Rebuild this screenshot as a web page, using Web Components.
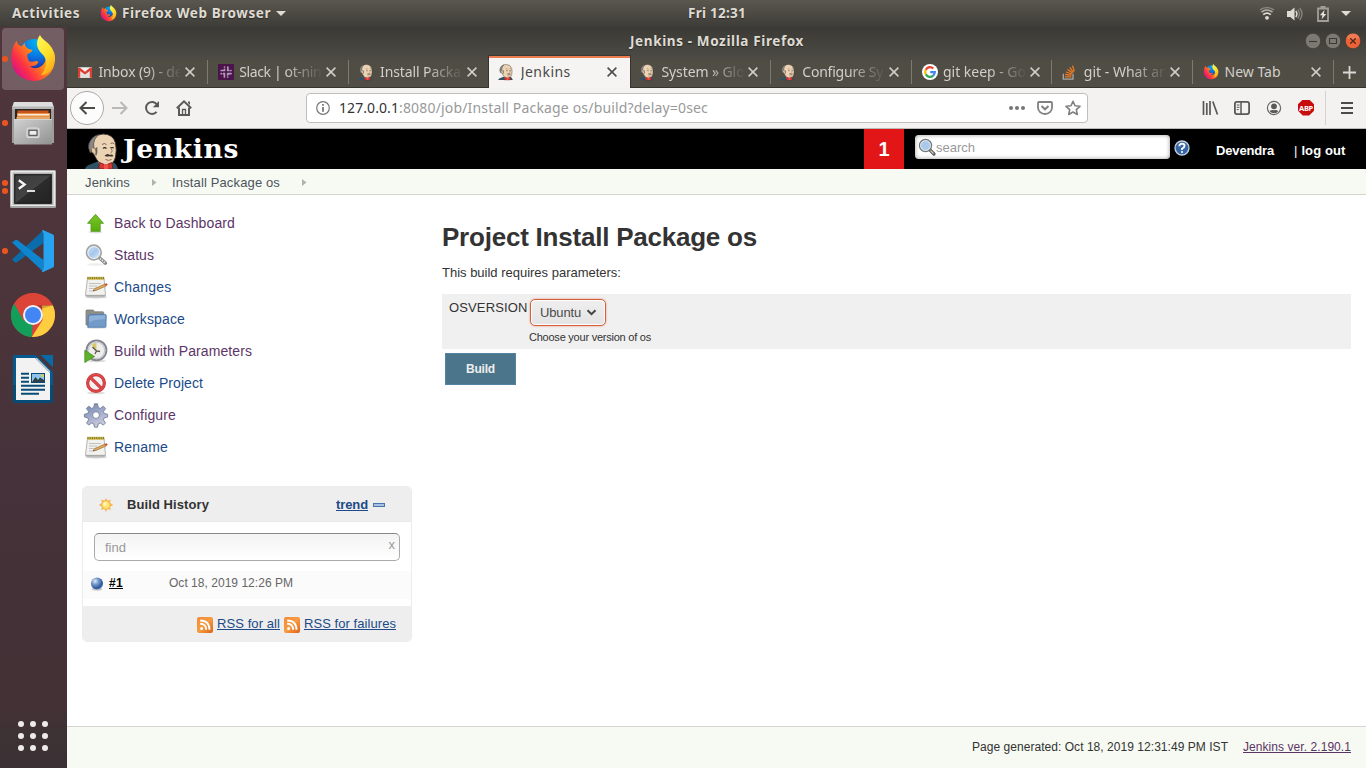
<!DOCTYPE html>
<html lang="en">
<head>
<meta charset="utf-8">
<title>Jenkins</title>
<style>
html,body{margin:0;height:100%;overflow:hidden;background:#fff}
body{font-family:"Liberation Sans",Arial,sans-serif;font-size:13px;color:#333}
</style>
</head>
<body>
<desk-screen></desk-screen>
<script>
const UI = '"Noto Sans","Open Sans",sans-serif';

const ICONS = {
firefox:`<svg viewBox="0 0 48 48"><defs>
<linearGradient id="a" x1="1" y1=".2" x2=".1" y2=".85"><stop offset="0" stop-color="#ffe92e"/><stop offset=".3" stop-color="#ffae12"/><stop offset=".52" stop-color="#ff7022"/><stop offset=".76" stop-color="#fb2f48"/><stop offset="1" stop-color="#d80f8e"/></linearGradient>
<radialGradient id="b" cx=".6" cy=".1" r="1"><stop offset="0" stop-color="#00b5f5"/><stop offset=".5" stop-color="#0a72e0"/><stop offset="1" stop-color="#2b1a8c"/></radialGradient>
<linearGradient id="c" x1=".3" y1="0" x2=".8" y2="1"><stop offset="0" stop-color="#fff44f"/><stop offset=".5" stop-color="#ffdf2c"/><stop offset="1" stop-color="#ffa013"/></linearGradient></defs>
<circle cx="25" cy="19.5" r="15.5" fill="url(#b)"/>
<path d="M7.800 5.500C8 9 9.500 10.500 12.500 11.200L16 7.800C15.500 11 17.500 14.300 23.500 15C22.500 18 18.500 18.500 18.200 20C18 22 20 26 20 26C23 28.500 27 24.500 29.300 26.800C28.500 31 23 31.500 21 31C25 35.500 34.500 33 36.500 25C38 19 35.500 15 33 12L45 17C48 27 44 38 35.500 43C27 48.500 13 46 6.500 37C0 28 1.500 13 7.800 5.500Z" fill="url(#a)"/>
<path d="M31 0C32.500 4.500 39.500 6.500 43.500 14C46.500 20 46 29 42.500 34C39.500 38.500 35 40 32 40C36.500 35 38.200 29 36.700 24.500C35 19 30.500 18 28.500 12C27.300 7 29 2.500 31 0Z" fill="url(#c)"/></svg>`,
files:`<svg viewBox="0 0 42 44"><defs><linearGradient id="a" x1="0" y1="0" x2="1" y2="1"><stop offset="0" stop-color="#d2d2d2"/><stop offset="1" stop-color="#919191"/></linearGradient></defs>
<path d="M2 1h38l2 5v36H0V6z" fill="#9d9d9d"/><path d="M2 1h38l1.500 5H.5z" fill="#dedede"/><path d="M0 5.500h42v3H0z" fill="#b6b6b6"/>
<path d="M3 8h36v12H3z" fill="#2a2523"/><path d="M5.500 9.500h31V13h-31z" fill="#c9541b"/><path d="M5 12h33v6H5z" fill="#e89043"/><path d="M6 13.200h31v1.200H6z" fill="#fff"/><path d="M4.500 16h33v2h-33z" fill="#e6a666"/>
<path d="M2 18h38v25.500H2z" fill="url(#a)"/><path d="M2 18h38v.8H2z" fill="#ddd"/><rect x="15" y="27" width="12" height="9.500" rx="2" fill="#bcbcbc" stroke="#ddd" stroke-width="1.200"/><rect x="17" y="29.300" width="8" height="5" fill="#eee" stroke="#444" stroke-width="1"/></svg>`,
terminal:`<svg viewBox="0 0 46 38"><defs><linearGradient id="a" x1="0" y1="0" x2="1" y2="1"><stop offset="0" stop-color="#3c3c3c"/><stop offset=".5" stop-color="#434343"/><stop offset=".51" stop-color="#2c2c2c"/><stop offset="1" stop-color="#222"/></linearGradient></defs>
<rect width="46" height="38" rx="1.500" fill="#a5a5a5"/><rect x=".8" y=".8" width="44.400" height="35.200" fill="#e9e9e9"/><rect x="2.500" y="2.500" width="41" height="32.500" fill="#b1b1b1"/><rect x="4.200" y="4.200" width="37.600" height="29.600" fill="#080808"/><rect x="5.200" y="5.200" width="35.600" height="27.600" fill="url(#a)"/>
<path d="M8.800 10.200l5.800 4.300-5.800 4.300" fill="none" stroke="#f4f4f4" stroke-width="2.400"/><path d="M17 21h8" stroke="#f4f4f4" stroke-width="1.800"/></svg>`,
vscode:`<svg viewBox="0 0 42 42"><path d="M0 29.500L31 .5 31.500 13 4.500 32.500Q3.300 33 2 31.500z" fill="#0b6cab"/><path d="M0 12.500l3.500-2.600Q4.600 9.500 6 10.400L31.500 30v12z" fill="#0f85cf"/><path d="M31 0l10 4.600q1 .5 1 1.600v29.500q0 1.200-1 1.700L31 42q-1.500.2-.6-1.500 1-.8 1.100-3V4.500Q31.400 2.500 30.200 1 30 0 31 0z" fill="#27a3f0"/></svg>`,
chrome:`<svg viewBox="0 0 44 44"><circle cx="22" cy="22" r="22" fill="#db4437"/><path d="M3.200 10.500L12.500 27 21.700 32l-1 12A22 22 0 0 1 3.200 10.500z" fill="#139e59"/><path d="M41.700 12.200A22 22 0 0 1 20.800 44L31.600 27 31 12.500z" fill="#ffcd40"/><path d="M3.200 10.500A22 22 0 0 1 41.800 12.300H22L12.500 27z" fill="#db4437"/><path d="M22 12.300h19.800l-10.800 3.500zM12.500 27L4.800 13z" fill="#0003"/><circle cx="22" cy="22" r="10" fill="#f1f1f1"/><circle cx="22" cy="22" r="8" fill="#4285f4"/></svg>`,
writer:`<svg viewBox="0 0 40 48"><path d="M27.500 0H40v12.500z" fill="#0a6aa5"/><path d="M2 0h21L40 17v29q0 2-2 2H2q-2 0-2-2V2q0-2 2-2z" fill="#045a8e"/><path d="M0 30h40v16q0 2-2 2H2q-2 0-2-2z" fill="#064c77"/><path d="M3 3h19l15 15v27H3z" fill="#f2f2f2"/><path d="M22 3l15 15v-2L24 3z" fill="#cfcfcf"/><path d="M8 18.800h8M8 22.800h8M8 26.800h8M8 30.800h24M8 34.800h24M8 38.800h18" stroke="#0a4c77" stroke-width="1.900"/><rect x="18.500" y="18.500" width="13" height="9" fill="#8dc4ec" stroke="#0a4c77"/><path d="M19 27l3.500-5 2.500 3 2-2.500L31 25v2z" fill="#2f3f46"/><circle cx="29.500" cy="20.500" r="1.500" fill="#ecc542"/></svg>`,
apps:`<svg viewBox="0 0 30 30" fill="#eeecea"><circle cx="3" cy="3" r="3"/><circle cx="15" cy="3" r="3"/><circle cx="27" cy="3" r="3"/><circle cx="3" cy="15" r="3"/><circle cx="15" cy="15" r="3"/><circle cx="27" cy="15" r="3"/><circle cx="3" cy="27" r="3"/><circle cx="15" cy="27" r="3"/><circle cx="27" cy="27" r="3"/></svg>`,
butler:`<svg viewBox="0 0 33 36"><path d="M0 36Q1 32.500 5 31.500l9-3.500h11q7 2 8 8z" fill="#2e5264"/><path d="M13 28l4 8h6l4-8z" fill="#f3f3f3"/>
<path d="M4.500 14Q5 2 18 1q10 0 12.500 9Q32 17 30.500 24 29 31 23 32q-7 .5-11-5l-4-7z" fill="#ecd3b4" stroke="#3a332d" stroke-width=".9"/>
<path d="M5.500 20Q2.500 15 4 10.500 6 5 10 3L13.500 1.700Q8.700 6 8.500 11L9 15.500l-1 2.500z" fill="#8a8785" stroke="#45413e" stroke-width=".7"/><path d="M10.500 15l1.800-1v5.500l-1 3.500-1-1z" fill="#66615d"/>
<path d="M9.500 21q-4-1.500-3.300-5 1.200-2.600 3.600-.6 1.200 1.200 1 3.200" fill="#e8c7a3" stroke="#6a5545" stroke-width=".8"/>
<path d="M17 11.500q2.500-2 4.500 0M25.500 10.500q2-1.500 4 .5" fill="none" stroke="#6b5747" stroke-width=".9"/><path d="M18 15.500q1.500-1.700 3.500 0M25.800 15q1.400-1.200 3 .2" fill="none" stroke="#222" stroke-width="1.100"/><path d="M25 14q4 4.500.5 6" fill="none" stroke="#8d6a4d" stroke-width=".9"/><path d="M19.500 22.700q3-2.700 5-.8 2.500-.9 4 1-2 1-4 .3-2.500.9-5-.5z" fill="#3f342b"/><path d="M20.500 26.500q3 1.800 6 0" fill="none" stroke="#7c4c3b" stroke-width=".8"/>
<path d="M14.500 29.500l6 2.500 6.500-2.500.8 6.500h-14z" fill="#d33833" stroke="#701515" stroke-width=".7"/><path d="M19 31h4v5h-4z" fill="#ee5548"/></svg>`,
gmail:`<svg viewBox="0 0 16 12"><rect width="16" height="12" rx="1" fill="#f2f2f2"/><path d="M2 12V3l6 5 6-5v9z" fill="#e4e1df"/><path d="M0 1.200V11q0 1 1 1h1.500V4.200L8 8.300l5.500-4.100V12H15q1 0 1-1V1.200Q15.500-.3 14 .4L8 5 2 .4Q.5-.3 0 1.200z" fill="#dc3f33"/></svg>`,
slack:`<svg viewBox="0 0 16 16"><rect width="16" height="16" fill="#4a154b"/><g stroke="#b79ab9" stroke-width="1.700" stroke-linecap="round"><path d="M6.500 5.300v1.200M6.500 3h0M9.800 3v3.500M12.800 6.500h.1M3.200 6.500h3.300M3.200 9.700h.1M9.700 9.700h3.300M9.800 6.500h1M5.400 9.700h1v3.300M9.700 9.700v1.200M9.700 13h0"/></g></svg>`,
google:`<svg viewBox="0 0 16 16"><circle cx="8" cy="8" r="8" fill="#fff"/><g fill="none" stroke-width="2.300"><path d="M11.300 4.500A4.800 4.800 0 0 0 3.800 5.700" stroke="#ea4335"/><path d="M3.800 5.700a4.800 4.800 0 0 0 0 4.700" stroke="#fbbc05"/><path d="M3.800 10.400a4.800 4.800 0 0 0 7.400 1.200" stroke="#34a853"/><path d="M11.200 11.600a4.800 4.800 0 0 0 1.600-3.500H8.200" stroke="#4285f4"/></g></svg>`,
stack:`<svg viewBox="0 0 16 16" fill="none"><path d="M1.300 9.800v5.300h9.700V9.800" stroke="#aaa9a5" stroke-width="1.300"/><path d="M3 12.900h6.500M3.200 10.500l6.300.6M4 8l5.900 2M5.500 5.500l5 3.400M7.700 3.300l3.800 5M10.500 1.600l1.800 5.700" stroke="#ee7a20" stroke-width="1.300"/></svg>`,
close:`<svg viewBox="0 0 10 10"><path d="M.6.6l8.800 8.800M9.400.6L.6 9.400" stroke="currentColor" stroke-width="1.500"/></svg>`,
plus:`<svg viewBox="0 0 14 14"><path d="M7 0v14M0 7h14" stroke="#d9d8d4" stroke-width="1.900"/></svg>`,
wifi:`<svg viewBox="0 0 14 12" fill="none"><circle cx="7" cy="10.300" r="1.900" fill="#dfdbd2"/><path d="M3.200 7.200q3.800-3.300 7.600 0" stroke="#dfdbd2" stroke-width="1.700"/><path d="M1.500 4.600q5.500-4.300 11 0" stroke="#b5b2ab" stroke-width="1.600"/><path d="M0 2.400q7-4.500 14 0" stroke="#8b8881" stroke-width="1.300"/></svg>`,
volume:`<svg viewBox="0 0 16 14" fill="none"><path d="M0 4h3.300L7.500.5v13L3.300 10H0z" fill="#dfdbd2"/><path d="M8.800 4q2.200 3 0 6" stroke="#dfdbd2" stroke-width="1.500"/><path d="M10.700 2.500q3.600 4.500 0 9M12.800 1q4.500 6 0 12" stroke="#85827b" stroke-width="1.400"/></svg>`,
battery:`<svg viewBox="0 0 12 16"><path d="M1 2.500h10V15H1z" fill="none" stroke="#a19e97" stroke-width="1.800"/><path d="M3.500 0h5v2h-5z" fill="#a19e97"/><path d="M7.500 4L3 9.300h2.500L4.500 13.500 9.200 8H6.800z" fill="#eae7df"/></svg>`,
caret:`<svg viewBox="0 0 10 5"><path d="M0 0h10L5 5z" fill="#dfdbd2"/></svg>`,
wmin:`<svg viewBox="0 0 16 16"><circle cx="8" cy="8" r="7.700" fill="#7c7972" stroke="#35342f" stroke-width=".6"/><path d="M4 8.500h8" stroke="#3a3935" stroke-width="1.100"/></svg>`,
wmax:`<svg viewBox="0 0 16 16"><circle cx="8" cy="8" r="7.700" fill="#7c7972" stroke="#35342f" stroke-width=".6"/><path d="M4.500 5.500h7v5h-7z" fill="none" stroke="#3a3935" stroke-width="1.100"/></svg>`,
wclose:`<svg viewBox="0 0 16 16"><circle cx="8" cy="8" r="7.700" fill="#ee6238" stroke="#35342f" stroke-width=".6"/><path d="M1.500 5a7 7 0 0 1 13 0Q8 8 1.500 5z" fill="#f58a68" opacity=".6"/><path d="M5.200 5.200l5.600 5.600M10.800 5.200l-5.600 5.600" stroke="#51281a" stroke-width="1.300"/></svg>`,
back:`<svg viewBox="0 0 16 14" fill="none" stroke="currentColor" stroke-width="2"><path d="M16 7H1.500M7.500 1l-6 6 6 6"/></svg>`,
fwd:`<svg viewBox="0 0 16 14" fill="none" stroke="currentColor" stroke-width="2"><path d="M0 7h14.500M8.500 1l6 6-6 6"/></svg>`,
reload:`<svg viewBox="0 0 16 16"><path d="M12.600 11.800A6 6 0 1 1 13 4.500" fill="none" stroke="#5a5957" stroke-width="2"/><path d="M15 1v6.200H8.800z" fill="#5a5957"/></svg>`,
home:`<svg viewBox="0 0 16 16" fill="none" stroke="#5a5957"><path d="M.8 8.300L8 1.300l7.200 7" stroke-width="2"/><path d="M3 7.500V15h10V7.500" stroke-width="2"/><path d="M6.500 15V9.500h3V15" stroke-width="1.300"/><path d="M12 1.500h2V5l-2-2z" fill="#5a5957" stroke="none"/></svg>`,
info:`<svg viewBox="0 0 14 14"><circle cx="7" cy="7" r="6.300" fill="none" stroke="#777" stroke-width="1.200"/><path d="M7 6v4.800M7 3v1.700" stroke="#777" stroke-width="1.800"/></svg>`,
dots:`<svg viewBox="0 0 16 4" fill="#777"><circle cx="2" cy="2" r="2"/><circle cx="8" cy="2" r="2"/><circle cx="14" cy="2" r="2"/></svg>`,
pocket:`<svg viewBox="0 0 16 14" fill="none" stroke="#808080" stroke-width="1.800"><path d="M2 1h12q1 0 1 1v4.500a7 6.500 0 0 1-14 0V2q0-1 1-1z"/><path d="M4.500 5L8 8.300 11.500 5" stroke-width="2"/></svg>`,
star:`<svg viewBox="0 0 16 16"><path d="M8 1.300l2 4.500 5 .5-3.700 3.300 1 4.900L8 12l-4.300 2.500 1-4.900L1 6.300l5-.5z" fill="none" stroke="#808080" stroke-width="1.600" stroke-linejoin="round"/></svg>`,
library:`<svg viewBox="0 0 16 14" stroke="#5a5957" stroke-width="1.700"><path d="M1.500 0v14M4.800 2v12M8 0v14M10.800.5L15.500 13.500"/></svg>`,
sidebar:`<svg viewBox="0 0 16 14" fill="none" stroke="#5a5957"><rect x=".9" y=".9" width="14.200" height="12.200" rx="2" stroke-width="1.800"/><path d="M7 1v12" stroke-width="1.500"/><path d="M2.800 4h2.700M2.800 6.300h2.700M2.800 8.600h2" /></svg>`,
account:`<svg viewBox="0 0 16 16"><circle cx="8" cy="8" r="6.600" fill="none" stroke="#6a6967" stroke-width="1.200"/><circle cx="8" cy="6.300" r="2.900" fill="#5a5957"/><path d="M3.800 11.200Q5 9.700 8 10.200q3-.5 4.200 1Q11 13.300 8 13.300t-4.200-2.100z" fill="#5a5957"/></svg>`,
menu:`<svg viewBox="0 0 12 12" stroke="#4c4b49" stroke-width="1.800"><path d="M0 1h12M0 6h12M0 11h12"/></svg>`,
help:`<svg viewBox="0 0 16 16"><circle cx="8" cy="8" r="7" fill="#3465a4" stroke="#c3cfe4" stroke-width="1.300"/><path d="M5.300 6.300Q5.500 3.600 8 3.600q2.600.1 2.600 2.300Q10.500 7.400 8 8.800V10" fill="none" stroke="#fff" stroke-width="1.800"/><circle cx="8" cy="12" r="1.100" fill="#fff"/></svg>`,
search:`<svg viewBox="0 0 24 24"><defs><linearGradient id="a" x2="1" y2="1"><stop offset="0" stop-color="#dcebfa"/><stop offset=".5" stop-color="#a5c6ec"/><stop offset="1" stop-color="#e4effa"/></linearGradient></defs><ellipse cx="12" cy="21.500" rx="9" ry="1.300" fill="#0001"/><path d="M15 14.500l6.300 5.500" stroke="#838381" stroke-width="3.600" stroke-linecap="round"/><path d="M16 15.400l5 4.400" stroke="#ddd" stroke-width="2" stroke-dasharray="1.500 1"/><circle cx="9.800" cy="9.500" r="7.200" fill="url(#a)" stroke="#a2a4a1" stroke-width="1.900"/><circle cx="9.800" cy="9.500" r="6" fill="none" stroke="#f4f8fd" stroke-width=".9"/></svg>`,
search2:`<svg viewBox="0 0 18 18"><path d="M11.500 11.500l4.500 4.500" stroke="#5c5e5b" stroke-width="3.200" stroke-linecap="round"/><path d="M12.500 12.500l3 3" stroke="#c8c8c6" stroke-width="1.200"/><circle cx="7.500" cy="7.500" r="6" fill="#a9c8ea" stroke="#777976" stroke-width="1.500"/><circle cx="7.500" cy="7.500" r="4.900" fill="none" stroke="#eef4fb" stroke-width=".9"/></svg>`,
up:`<svg viewBox="0 0 24 24"><defs><linearGradient id="a" x2="0" y2="1"><stop offset="0" stop-color="#7cc52a"/><stop offset="1" stop-color="#55ad0b"/></linearGradient></defs><ellipse cx="11.500" cy="21" rx="7" ry="1.400" fill="#0002"/><path d="M11.500 3.300l8 9h-3.300v8H7v-8H3.500z" fill="url(#a)" stroke="#5a9a2a" stroke-width=".9"/></svg>`,
note:`<svg viewBox="0 0 24 24"><ellipse cx="12" cy="22" rx="11" ry="1.400" fill="#0003"/><path d="M3.500 3h16.500l1.500 17q0 1-1 1H2.500q-1 0-1-1z" fill="#f1f1ef" stroke="#adada9" stroke-width=".9"/><path d="M2 20.500h19" stroke="#a9a9a5" stroke-width="1.300"/><path d="M3.200 1.800h17v3h-17z" fill="#cbb94f"/><path d="M3.500 3h17" stroke="#85752a" stroke-width="2" stroke-dasharray="1 1.200"/><path d="M5 8.500h12M5 11h8M5 13.500h6M5 16h4" stroke="#c2c2c0"/><path d="M9 16l2-2.600 10-4.400 1 2-10 4.400z" fill="#e3a95c" stroke="#9a6c34" stroke-width=".7"/><path d="M20.800 9l1.700-.8q1.300.6 1 1.900l-1.500.9z" fill="#d93f35"/><path d="M9 16l.8-1.200.7.900z" fill="#333"/></svg>`,
folder:`<svg viewBox="0 0 24 24"><ellipse cx="12.500" cy="20.500" rx="10.500" ry="1.300" fill="#0002"/><path d="M2 18V3.800q0-.8.800-.8h6.500l1.200 1.800h8.300q.9 0 .9.900V18z" fill="#8e8f8b" stroke="#7c7c79" stroke-width=".8"/><path d="M4.300 9q.3-1.300 1.500-1.300 10-.3 15-.3 1.500 0 1.400 1.200l-.3 10.800q0 .8-1 .8H3.800z" fill="#729bc9" stroke="#5079ab" stroke-width=".9"/><path d="M5.200 9q8-.8 16-.8l-.2 4Q11 12 5 15.500z" fill="#9cbde2" opacity=".65"/></svg>`,
clock:`<svg viewBox="0 0 24 24"><ellipse cx="13" cy="22" rx="9" ry="1.300" fill="#0002"/><circle cx="12.500" cy="11.300" r="9.900" fill="#ededeb" stroke="#85878f" stroke-width="2"/><circle cx="12.500" cy="11.300" r="8.300" fill="none" stroke="#c8cbd6" stroke-width="1.300"/><path d="M12.500 11.300L7.500 6q2.200-2.200 5-2z" fill="#d8c866"/><path d="M8.500 8l4 4 3.500.5M12.500 12l-1.500 3" fill="none" stroke="#55534a" stroke-width="1.300"/><path d="M.8 11.300l9.700 6.200-9.700 6z" fill="#5cb327" stroke="#4a8b24" stroke-width=".8"/></svg>`,
no:`<svg viewBox="0 0 24 24"><ellipse cx="12" cy="22" rx="9" ry="1.300" fill="#0002"/><circle cx="12" cy="12" r="8.400" fill="#f6f1f1" stroke="#c4383a" stroke-width="3.200"/><circle cx="12" cy="12" r="8.400" fill="none" stroke="#df4649" stroke-width="2"/><path d="M6.300 6.300l11.400 11.400" stroke="#c83437" stroke-width="3.200"/><path d="M6.300 6.300l11.400 11.400" stroke="#e04a4c" stroke-width="1.900"/></svg>`,
gear:`<svg viewBox="0 0 24 24"><defs><linearGradient id="a" x2=".5" y2="1"><stop offset="0" stop-color="#6d86ae"/><stop offset=".6" stop-color="#a7aecd"/><stop offset="1" stop-color="#c8cadb"/></linearGradient></defs><path fill-rule="evenodd" d="M10.500.8h3l.8 3.700 2 .9 3-2.200 2.300 2.300-2.200 3 .9 2 3.300.7v2.900l-3.300.7-.9 2.100 2.100 3-2.200 2.200-3-2.100-2 .9-.8 3.300h-3l-.8-3.300-2-.9-3 2.100-2.200-2.200 2.100-3-.9-2.100-3.300-.7v-2.900l3.300-.7.9-2-2.200-3 2.300-2.300 3 2.200 2-.9zM12 8.700a3.400 3.400 0 1 0 0 6.800 3.400 3.400 0 0 0 0-6.800z" fill="url(#a)" stroke="#6a7493" stroke-width=".8"/></svg>`,
sun:`<svg viewBox="0 0 16 16"><path d="M8 .7l1.300 3.100 3.700-1.300-1.200 3.300L15.300 8l-3.500 1.700 1.200 3.300-3.700-1.200L8 15.300l-1.300-3.500L3 13l1.200-3.300L.7 8l3.500-2.200L3 2.500l3.700 1.300z" fill="#f8b75c"/><circle cx="8" cy="8" r="4.300" fill="#fce36a" stroke="#f3a63d" stroke-width=".8"/><circle cx="7" cy="7" r="2" fill="#fff6c0"/></svg>`,
minus:`<svg viewBox="0 0 12 4"><rect x=".5" y=".5" width="11" height="3" fill="#a9c1e2" stroke="#4a74ad"/></svg>`,
ball:`<svg viewBox="0 0 16 16"><defs><radialGradient id="a" cx=".35" cy=".3" r=".75"><stop offset="0" stop-color="#e6eef9"/><stop offset=".35" stop-color="#7a9ed0"/><stop offset=".8" stop-color="#2c579a"/><stop offset="1" stop-color="#5d82bb"/></radialGradient></defs><ellipse cx="8" cy="14" rx="6" ry="1.600" fill="#0003"/><circle cx="8" cy="7.500" r="6.900" fill="url(#a)"/></svg>`,
rss:`<svg viewBox="0 0 16 16"><defs><linearGradient id="a" x2="1" y2="1"><stop offset="0" stop-color="#f08a3a"/><stop offset=".5" stop-color="#f79c42"/><stop offset="1" stop-color="#dd6117"/></linearGradient></defs><rect width="16" height="16" rx="2" fill="url(#a)"/><circle cx="4.600" cy="11.600" r="1.500" fill="#fff"/><path d="M3.200 6.800q6 0 6 6M3.200 3.500q9.300 0 9.300 9.300" fill="none" stroke="#fff" stroke-width="1.900"/></svg>`,
chev:`<svg viewBox="0 0 10 7"><path d="M1 1.200l4 4 4-4" fill="none" stroke="#444" stroke-width="2"/></svg>`,
crumb:`<svg viewBox="0 0 5 7"><path d="M0 0l4.500 3.500L0 7z" fill="#b0b3ad"/></svg>`
};

/* Base class: clones a template into an open shadow root. */
class Base extends HTMLElement {
  connectedCallback() {
    if (this.shadowRoot) return;
    const t = document.createElement('template');
    t.innerHTML = this.html();
    this.attachShadow({mode:'open'}).append(t.content.cloneNode(true));
  }
  at(n, d='') { return this.getAttribute(n) ?? d; }
}
const def = (n, f) => customElements.define(n, class extends Base { html() { return f(this); } });

/* <ui-icon name w h> */
def('ui-icon', e => `<style>:host{display:inline-flex;flex:none;width:${e.at('w','16')}px;height:${e.at('h', e.at('w','16'))}px}svg{width:100%;height:100%;display:block;overflow:visible}</style>${ICONS[e.at('name')]}`);

def('desk-screen', () => `<style>
:host{display:grid;width:1366px;height:768px;grid-template:27px 741px / 67px 1299px;overflow:hidden}
top-panel{grid-column:1/3}</style>
<top-panel></top-panel><app-dock></app-dock><browser-window></browser-window>`);

def('top-panel', () => `<style>
:host{display:grid;grid-template-columns:688px auto 1fr;align-items:center;background:linear-gradient(#5a574e,#3d3c38);font:bold 13.500px/27px ${UI};color:#dfdbd2;text-shadow:0 1px 1px #0006}
.l,.r{display:flex;align-items:center}.l{padding-left:12px}.r{justify-content:flex-end;padding-right:15px}
</style><div class="l"><fit-label w="68">Activities</fit-label><ui-icon name="firefox" w="17" style="margin:0 5px 0 20px"></ui-icon><fit-label w="149">Firefox Web Browser</fit-label><ui-icon name="caret" w="10" h="5" style="margin-left:5px"></ui-icon></div>
<span><fit-label w="58">Fri 12:31</fit-label></span>
<div class="r"><ui-icon name="wifi" w="14" h="13"></ui-icon><ui-icon name="volume" w="16" h="14" style="margin:0 14px 0 13px"></ui-icon><ui-icon name="battery" w="12" h="16"></ui-icon><ui-icon name="caret" w="10" h="5" style="margin-left:12px"></ui-icon></div>`);

def('app-dock', () => `<style>
:host{display:flex;flex-direction:column;align-items:flex-start;gap:2px;padding:1px 0 0 2px;box-sizing:border-box;background:linear-gradient(#50363c,#4a343a 45%,#45323a 60%,#433136 92%,#3d3234 95%,#3b3134)}
.g{display:flex;margin:auto 0 17px 16px}</style>
<dock-item active dots="1"><ui-icon name="firefox" w="48"></ui-icon></dock-item>
<dock-item dots="1"><ui-icon name="files" w="42" h="44"></ui-icon></dock-item>
<dock-item dots="2"><ui-icon name="terminal" w="46" h="38" style="margin-top:4px"></ui-icon></dock-item>
<dock-item dots="1"><ui-icon name="vscode" w="42"></ui-icon></dock-item>
<dock-item dots="0"><ui-icon name="chrome" w="44"></ui-icon></dock-item>
<dock-item dots="0"><ui-icon name="writer" w="40" h="48"></ui-icon></dock-item>
<div class="g"><ui-icon name="apps" w="30"></ui-icon></div>`);

def('dock-item', e => `<style>
:host{display:grid;place-items:center;width:62px;height:62px;border-radius:4px;position:relative}
:host([active]){background:#fff3}
.d{position:absolute;left:0;top:0;height:100%;display:flex;flex-direction:column;justify-content:center;gap:2.500px}
i{width:5.500px;height:5.500px;border-radius:50%;background:#e95420}</style><div class="d">${'<i></i>'.repeat(+e.at('dots'))}</div><slot></slot>`);

def('browser-window', () => `<style>:host{display:flex;flex-direction:column}jenkins-page{flex:1}</style>
<title-bar></title-bar><tab-strip></tab-strip><nav-bar></nav-bar><jenkins-page></jenkins-page>`);

def('title-bar', () => `<style>
:host{display:grid;grid-template-columns:563px auto 1fr;align-items:center;height:28px;background:linear-gradient(#3a3935,#4b4943);font:bold 13.500px/28px ${UI};color:#dfdbd2;text-shadow:0 1px 1px #0006}
.b{display:flex;justify-content:flex-end;gap:4px;padding-right:5px}</style><span></span><span><fit-label w="174">Jenkins - Mozilla Firefox</fit-label></span><div class="b"><ui-icon name="wmin"></ui-icon><ui-icon name="wmax"></ui-icon><ui-icon name="wclose"></ui-icon></div>`);

def('tab-strip', () => {
  const t=[['gmail','Inbox (9) - de',84],['slack','Slack | ot-nin',82],['butler','Install Packa',81],['butler','Jenkins',50,1],['butler','System » Glo',83],['butler','Configure Sy',81],['google','git keep - Go',83],['stack','git - What an',84],['firefox','New Tab',56]];
  return `<style>:host{display:flex;height:33px;background:linear-gradient(#4b4943,#504d45 8px);box-sizing:border-box;box-shadow:inset 0 -1px #35342f}.p{flex:1;display:grid;place-items:center;padding:3px 1px 2px 0}</style>`+
  t.map(([i,s,w,a],k)=>`<browser-tab icon="${i}" w="${w}" ${a===1?'active':''} ${k===2||a===1?'nosep':''}>${s}</browser-tab>`).join('')+`<div class="p"><ui-icon name="plus" w="13"></ui-icon></div>`;
});

def('browser-tab', e => `<style>
:host{display:flex;align-items:center;box-sizing:border-box;width:140.750px;height:33px;padding:3px 0 2px 10px;position:relative;font:14px/28px ${UI};color:#d0cfca}
:host(:not([nosep]))::after{content:"";position:absolute;right:0;top:5px;height:24px;width:1px;background:#7d7a72}
:host([active]){background:#f5f4f2;box-shadow:inset 0 1px #3a3935,inset 0 3px #ef7b50,-1px 0 #35342f,1px 0 #35342f;color:#4a4a48}
.f{width:16px;display:flex;justify-content:center}
:host([icon="butler"]) .f{justify-content:flex-start;margin-left:-1px;margin-right:1px}
.t{width:81.500px;height:28px;margin-left:5.500px;overflow:hidden;white-space:nowrap;-webkit-mask:linear-gradient(90deg,#000 46px,transparent 84px)}
:host([active]) .t,:host([w="56"]) .t{-webkit-mask:none}
.x{margin-left:5px;display:flex}</style>
<div class="f"><ui-icon name="${e.at('icon')}" w="${e.at('icon')==='gmail'?14:e.at('icon')==='butler'?15:16}" h="${e.at('icon')==='gmail'?11:16}"></ui-icon></div><div class="t"><fit-label w="${e.at('w')}"><slot></slot></fit-label></div><div class="x"><ui-icon name="close" w="10"></ui-icon></div>`);

def('nav-bar', () => `<style>
:host{display:flex;align-items:center;height:41px;box-sizing:border-box;background:#f3f2f0;border-bottom:1px solid #bcbab6;padding:0 13px 1px 3px}
.bk{width:32px;height:32px;border:1px solid #aaa;border-radius:50%;background:#fcfcfc;display:grid;place-items:center;color:#4c4b49}
.url{display:flex;align-items:center;box-sizing:border-box;width:782px;height:30px;border:1px solid #c0beba;border-radius:4px;background:#fff;margin-left:114px;padding:0 6px 0 9px;font:14px/28px ${UI};color:#999}
.url b{font-weight:400;color:#333}.url b,.url fit-label{padding-top:1px}b fit-label{padding:0!important}
.sp{flex:1}
.abp{width:16px;height:16px;background:#c70d0d;clip-path:polygon(30% 0,70% 0,100% 30%,100% 70%,70% 100%,30% 100%,0 70%,0 30%);color:#fff;font:bold 7.500px/16px ${UI};text-align:center}
.v{width:1px;height:34px;background:#d3d2d0;margin:0 15px 0 11px}</style>
<div class="bk"><ui-icon name="back" w="16" h="14"></ui-icon></div>
<ui-icon name="fwd" w="16" h="14" style="color:#b9b8b6;margin-left:8px"></ui-icon>
<ui-icon name="reload" style="margin-left:16px"></ui-icon><ui-icon name="home" style="margin-left:16px"></ui-icon>
<div class="url"><ui-icon name="info" w="14" style="margin-right:9px"></ui-icon><b><fit-label w="60">127.0.0.1</fit-label></b><fit-label w="309">:8080/job/Install Package os/build?delay=0sec</fit-label><span class="sp"></span><ui-icon name="dots" w="16" h="4"></ui-icon><ui-icon name="pocket" w="16" h="14" style="margin:0 12px"></ui-icon><ui-icon name="star"></ui-icon></div>
<span class="sp"></span><ui-icon name="library" w="16" h="14"></ui-icon><ui-icon name="sidebar" w="16" h="14" style="margin:0 16px"></ui-icon><ui-icon name="account"></ui-icon><div class="abp" style="margin-left:16px"><fit-label w="14">ABP</fit-label></div><div class="v"></div><ui-icon name="menu" w="12"></ui-icon>`);

def('jenkins-page', () => `<style>
:host{display:flex;flex-direction:column;background:#fff}
main{flex:1;display:grid;grid-template-columns:345px 1fr;column-gap:30px;min-height:0}</style>
<jenkins-header></jenkins-header><bread-crumbs></bread-crumbs>
<main><side-panel></side-panel><build-form></build-form></main><page-footer></page-footer>`);

def('jenkins-header', () => `<style>
:host{display:flex;height:40px;background:#000;color:#fff;padding-left:18px;overflow:hidden}
.w{font:bold 26.500px/39px "DejaVu Serif",serif;margin-left:5px}
.n{margin-left:auto;width:40px;background:#e21617;font:bold 20px/40px "Liberation Sans",sans-serif;text-align:center}
.s{display:flex;align-items:center;box-sizing:border-box;width:255px;height:24px;margin:6px 4px 0 11px;border-radius:4px;background:#fff;box-shadow:inset 0 0 4px #999;padding-left:3px;color:#999;line-height:22px}
.u{width:150px;font-weight:bold;line-height:43px;display:flex;margin-left:26px}</style>
<ui-icon name="butler" w="33" h="36" style="margin-top:4px;align-self:flex-start"></ui-icon><div class="w"><fit-label w="116">Jenkins</fit-label></div>
<div class="n">1</div><div class="s"><ui-icon name="search2" w="18"></ui-icon><span style="padding-top:2px"><fit-label w="39">search</fit-label></span></div><ui-icon name="help" style="margin-top:11px"></ui-icon>
<div class="u"><fit-label w="58">Devendra</fit-label><span style="font-weight:400;margin:0 4px 0 20px">|</span><fit-label w="44">log out</fit-label></div>`);

def('bread-crumbs', () => `<style>:host{display:flex;align-items:center;height:26px;box-sizing:border-box;background:#f6faf2;border-bottom:1px solid #d3d7cf;padding:2px 0 0 18px;color:#4d545d;line-height:24px}</style>
<fit-label w="45">Jenkins</fit-label><ui-icon name="crumb" w="5" h="7" style="margin:0 15px 0 22px"></ui-icon><fit-label w="108">Install Package os</fit-label><ui-icon name="crumb" w="5" h="7" style="margin-left:22px"></ui-icon>`);

def('side-panel', () => {
  const l=[['up','Back to Dashboard',121,1],['search','Status',40,1],['note','Changes',57.5],['folder','Workspace',71],['clock','Build with Parameters',138,1],['no','Delete Project',89],['gear','Configure',62,1],['note','Rename',54]];
  return `<style>:host{display:block;padding:12px 0 0 15px}task-link{height:32px}build-history{margin-top:23px}</style>`+l.map(([i,s,w,v])=>`<task-link icon="${i}" w="${w}" ${v?'visited':''}>${s}</task-link>`).join('')+'<build-history></build-history>';
});
def('task-link', e => `<style>:host{display:flex;align-items:center;gap:6px;padding-left:2px;font-size:14px;line-height:32px;color:#204a87}:host([visited]){color:#5c3566}</style><ui-icon name="${e.at('icon')}" w="24"></ui-icon><fit-label w="${e.at('w')}"><slot></slot></fit-label>`);

def('build-history', () => `<style>
:host{display:block;box-sizing:border-box;width:330px;height:156px;border:1px solid #ececec;border-radius:5px;overflow:hidden;background:#fff}
.h{display:flex;align-items:center;box-sizing:border-box;height:35px;background:#eee;border-bottom:1px solid #e9e9e9;padding:2px 26px 0 15px;line-height:20px;font-weight:bold}
.h u{margin-left:auto;color:#204a87}
.f{display:flex;justify-content:space-between;box-sizing:border-box;height:28px;margin:11px 11px 10px;padding:0 4px 0 10px;border:1px solid #aaa;border-top:1px solid #888;border-radius:5px;background:linear-gradient(#f3f3f3,#fff);color:#999;line-height:27px}
.r{display:flex;align-items:center;height:26px;background:#fbfbfb;padding:0 0 2px 7px;line-height:22px;margin-bottom:7px;font-size:12px;color:#666}
.b{display:flex;align-items:center;height:36px;background:#eee;color:#204a87;padding-left:114px;line-height:34px}</style>
<div class="h"><ui-icon name="sun" style="margin-right:13px"></ui-icon><fit-label w="82">Build History</fit-label><u><fit-label w="32">trend</fit-label></u><ui-icon name="minus" w="12" h="4" style="margin-left:5px"></ui-icon></div>
<div class="f"><fit-label w="21">find</fit-label><span style="line-height:22px">x</span></div>
<div class="r"><ui-icon name="ball" w="14" style="margin-top:-1px"></ui-icon><b style="margin:-2px 46px 0 5px;color:#000"><u><fit-label w="14">#1</fit-label></u></b><span style="margin-top:-2px"><fit-label w="124">Oct 18, 2019 12:26 PM</fit-label></span></div>
<div class="b"><ui-icon name="rss" style="margin-right:4px;margin-top:1px"></ui-icon><u><fit-label w="63">RSS for all</fit-label></u><ui-icon name="rss" style="margin:1px 4px 0"></ui-icon><u><fit-label w="92">RSS for failures</fit-label></u></div>`);

def('build-form', () => `<style>
:host{display:block;padding:26px 15px 0 0}
h1{margin:0;font-size:26px;line-height:32px;color:#333;font-weight:bold}
p{margin:12px 0 13px;line-height:16px}
.box{display:grid;grid-template-columns:80px auto;box-sizing:border-box;height:55px;background:#f0f0f0;padding:4px 7px}
.k{line-height:20px}
.sel{display:flex;align-items:center;box-sizing:border-box;width:76px;height:27px;margin-left:1px;border:1px solid #d2613c;border-radius:5px;box-shadow:0 0 2px #e95420aa,inset 0 0 1px 1px #fff;background:linear-gradient(#efefef,#e3e3e3);padding-left:9px;gap:5px;margin-top:1px;color:#4c4c4c}
.d{font-size:11px;line-height:20px;margin-top:1px}
.btn{display:grid;place-items:center;box-sizing:border-box;width:71px;height:32px;margin:4px 3px;background:#4b758b;border:1px solid #5582a0;color:#eee;font-weight:bold;font-size:12px}</style>
<h1><fit-label w="315">Project Install Package os</fit-label></h1><p><fit-label w="179">This build requires parameters:</fit-label></p>
<div class="box"><div class="k"><fit-label w="78.5">OSVERSION</fit-label></div><div><div class="sel"><fit-label w="41">Ubuntu</fit-label><ui-icon name="chev" w="11" h="7" style="margin-top:-1px"></ui-icon></div><div class="d"><fit-label w="122">Choose your version of os</fit-label></div></div></div>
<div class="btn"><span><fit-label w="29">Build</fit-label></span></div>`);

def('page-footer', () => `<style>:host{display:flex;justify-content:flex-end;gap:15px;height:42px;box-sizing:border-box;background:#f6faf2;border-top:1px solid #d3d7cf;padding-right:15px;font-size:12px;line-height:40px}u{color:#5c3566}</style><fit-label w="256">Page generated: Oct 18, 2019 12:31:49 PM IST</fit-label><u><fit-label w="108">Jenkins ver. 2.190.1</fit-label></u>`);

/* Text run tracked to a given advance width. Defined last, so its context is already styled. */
customElements.define('fit-label', class extends HTMLElement {
  connectedCallback() {
    if (this.shadowRoot) return;
    this.attachShadow({mode:'open'}).innerHTML = '<style>:host{display:inline;white-space:nowrap}</style><slot></slot>';
    const s = this.querySelector('slot');
    const txt = s ? s.assignedNodes().map(n=>n.textContent).join('') : this.textContent;
    this.style.letterSpacing = '0px';
    const w = this.getBoundingClientRect().width;
    this.style.letterSpacing = ((+this.getAttribute('w') - w) / txt.length).toFixed(3) + 'px';
  }
});
</script>
</body>
</html>
